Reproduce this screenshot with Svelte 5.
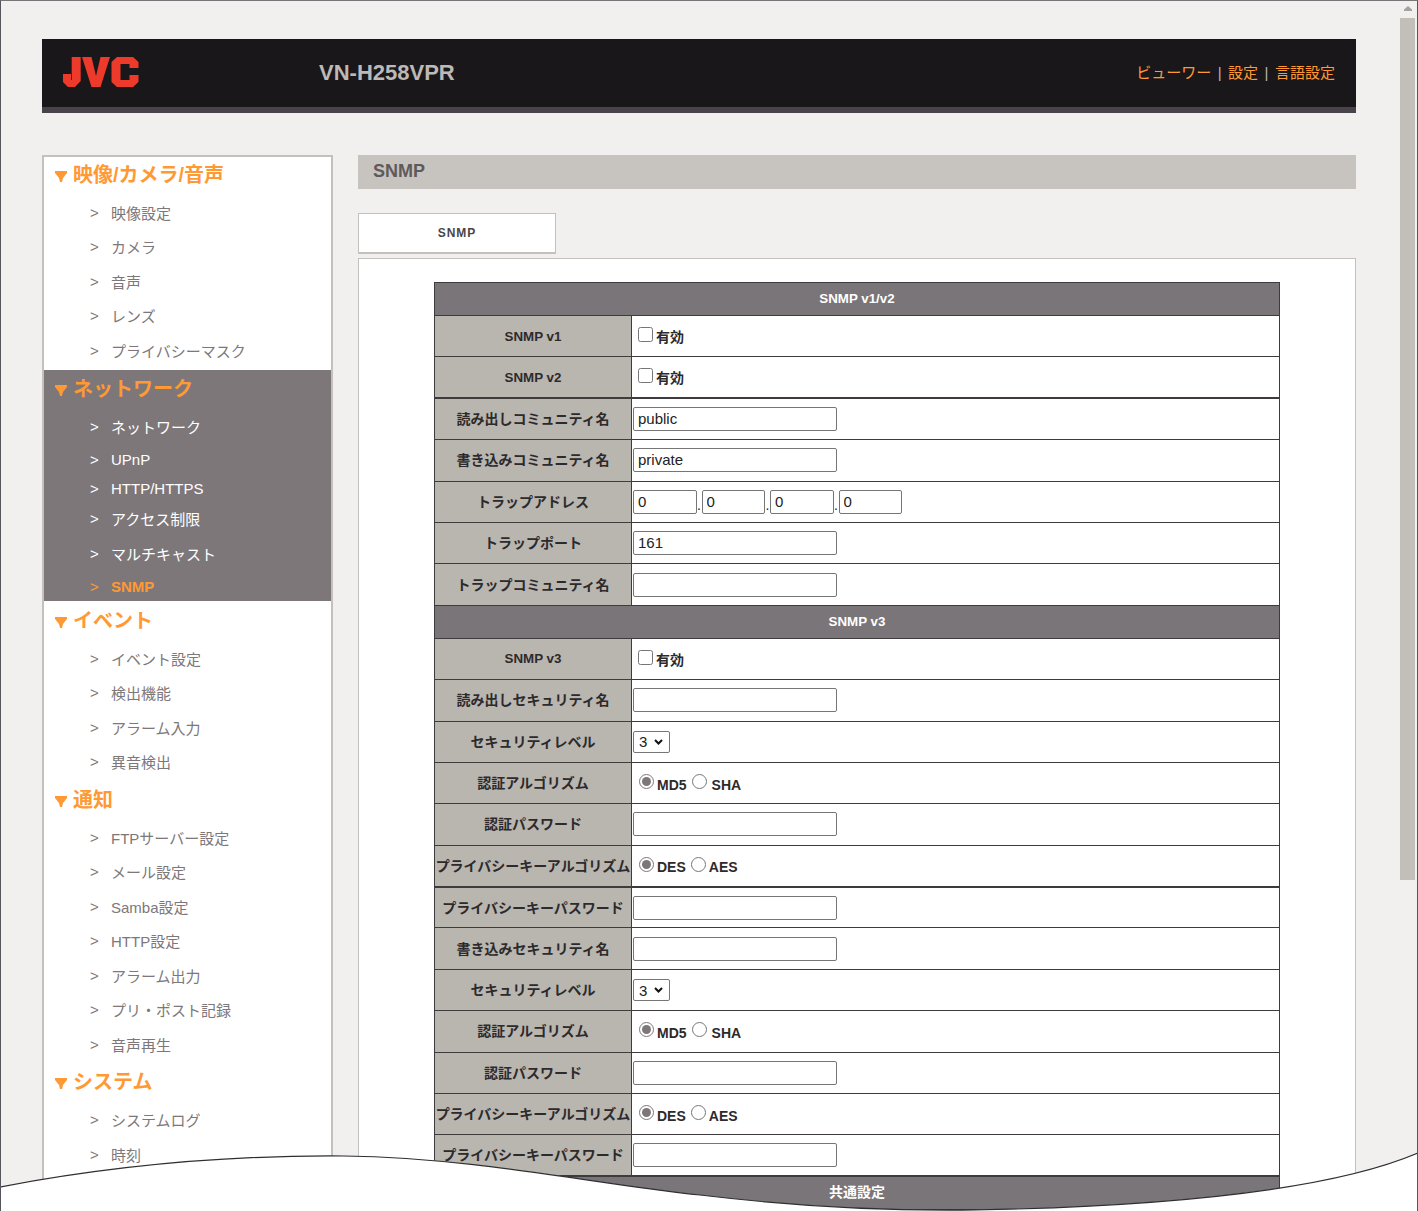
<script lang="ts">
  type Item = { label: string; short?: boolean; current?: boolean };
  type Group = { title: string; active?: boolean; items: Item[] };

  const groups: Group[] = [
    {
      title: '映像/カメラ/音声',
      items: [{ label: '映像設定' }, { label: 'カメラ' }, { label: '音声' }, { label: 'レンズ' }, { label: 'プライバシーマスク' }],
    },
    {
      title: 'ネットワーク',
      active: true,
      items: [
        { label: 'ネットワーク' },
        { label: 'UPnP', short: true },
        { label: 'HTTP/HTTPS', short: true },
        { label: 'アクセス制限' },
        { label: 'マルチキャスト' },
        { label: 'SNMP', short: true, current: true },
      ],
    },
    {
      title: 'イベント',
      items: [{ label: 'イベント設定' }, { label: '検出機能' }, { label: 'アラーム入力' }, { label: '異音検出' }],
    },
    {
      title: '通知',
      items: [
        { label: 'FTPサーバー設定' },
        { label: 'メール設定' },
        { label: 'Samba設定' },
        { label: 'HTTP設定' },
        { label: 'アラーム出力' },
        { label: 'プリ・ポスト記録' },
        { label: '音声再生' },
      ],
    },
    {
      title: 'システム',
      items: [{ label: 'システムログ' }, { label: '時刻' }],
    },
  ];

  type Row =
    | { kind: 'head'; label: string }
    | { kind: 'check' | 'text' | 'ip' | 'level'; label: string; value?: string; thick?: boolean }
    | { kind: 'radio'; label: string; options: string[]; thick?: boolean };

  const rows: Row[] = [
    { kind: 'head', label: 'SNMP v1/v2' },
    { kind: 'check', label: 'SNMP v1' },
    { kind: 'check', label: 'SNMP v2', thick: true },
    { kind: 'text', label: '読み出しコミュニティ名', value: 'public' },
    { kind: 'text', label: '書き込みコミュニティ名', value: 'private' },
    { kind: 'ip', label: 'トラップアドレス' },
    { kind: 'text', label: 'トラップポート', value: '161' },
    { kind: 'text', label: 'トラップコミュニティ名' },
    { kind: 'head', label: 'SNMP v3' },
    { kind: 'check', label: 'SNMP v3' },
    { kind: 'text', label: '読み出しセキュリティ名' },
    { kind: 'level', label: 'セキュリティレベル' },
    { kind: 'radio', label: '認証アルゴリズム', options: ['MD5', 'SHA'] },
    { kind: 'text', label: '認証パスワード' },
    { kind: 'radio', label: 'プライバシーキーアルゴリズム', options: ['DES', 'AES'], thick: true },
    { kind: 'text', label: 'プライバシーキーパスワード' },
    { kind: 'text', label: '書き込みセキュリティ名' },
    { kind: 'level', label: 'セキュリティレベル' },
    { kind: 'radio', label: '認証アルゴリズム', options: ['MD5', 'SHA'] },
    { kind: 'text', label: '認証パスワード' },
    { kind: 'radio', label: 'プライバシーキーアルゴリズム', options: ['DES', 'AES'] },
    { kind: 'text', label: 'プライバシーキーパスワード', thick: true },
    { kind: 'head', label: '共通設定' },
  ];

  const isLatin = (label: string) => label.startsWith('SNMP');
</script>

<div class="page">
  <header class="top">
    <div class="top-main">
      <svg class="logo" viewBox="0 0 77 30" width="77" height="30" aria-label="JVC">
        <path d="M8.7 0H17.7V24L12 30H5L0 25V17H8V23H8.7Z" />
        <path d="M19 0H28.5L33 19L37.5 0H47L37.5 30H28.5Z" />
        <path d="M54 0H70L75.5 5V11H66.5V7H57.5V23H66.5V18H75.5V25L70 30H54L48.5 25V5Z" />
      </svg>
      <div class="model">VN-H258VPR</div>
      <nav class="links">
        <a href="#viewer">ビューワー</a><span class="sep">|</span><a href="#settings">設定</a><span class="sep">|</span><a href="#lang">言語設定</a>
      </nav>
    </div>
  </header>

  <div class="body">
    <aside class="side">
      {#each groups as group}
        <section class="group" class:active={group.active}>
          <h3>
            <svg class="tri" viewBox="0 0 12 11" width="12" height="11"><path d="M0 0H12V2L8 7L7 11H5L4 7L0 2Z" /></svg>
            {group.title}
          </h3>
          <ul>
            {#each group.items as item}
              <li class:short={item.short} class:current={item.current}>
                <span class="arrow">&gt;</span>
                <span>{item.label}</span>
              </li>
            {/each}
          </ul>
        </section>
      {/each}
    </aside>

    <main class="main">
      <div class="title">SNMP</div>
      <div class="tab">SNMP</div>
      <div class="panel">
        <table>
          <colgroup>
            <col class="col-name" />
            <col />
          </colgroup>
          <tbody>
            {#each rows as row, r}
              {#if row.kind === 'head'}
                <tr class="head"><th colspan="2" class:latin={isLatin(row.label)}>{row.label}</th></tr>
              {:else}
                <tr class:thick={row.thick}>
                  <th class="name" class:latin={isLatin(row.label)}>{row.label}</th>
                  <td>
                    {#if row.kind === 'check'}
                      <label class="opt check"><input type="checkbox" /><span class="lbl">有効</span></label>
                    {:else if row.kind === 'text'}
                      <input class="field" type="text" value={row.value ?? ''} />
                    {:else if row.kind === 'ip'}
                      <div class="ip">
                        <input class="octet" type="text" value="0" /><span class="dot">.</span>
                        <input class="octet" type="text" value="0" /><span class="dot">.</span>
                        <input class="octet" type="text" value="0" /><span class="dot">.</span>
                        <input class="octet" type="text" value="0" />
                      </div>
                    {:else if row.kind === 'level'}
                      <div class="select-wrap">
                        <select class="level"><option>3</option></select>
                        <svg class="chev" viewBox="0 0 9 6" width="9" height="6"><path d="M1 1L4.5 4.5L8 1" /></svg>
                      </div>
                    {:else if row.kind === 'radio'}
                      <div class="radios">
                        {#each row.options as option, i}
                          <label class="opt"><input type="radio" name={'r' + r} checked={i === 0} /><span class="lbl" class:sha={option === 'SHA'}>{option}</span></label>
                        {/each}
                      </div>
                    {/if}
                  </td>
                </tr>
              {/if}
            {/each}
          </tbody>
        </table>
      </div>
    </main>
  </div>

  <!-- Page scrollbar -->
  <div class="scroll">
    <svg viewBox="0 0 8 5" width="8" height="5"><path d="M0 5V3.5L4 0L8 3.5V5Z" /></svg>
    <div class="thumb"></div>
  </div>

  <!-- Torn paper edge -->
  <svg class="tear" viewBox="0 0 1418 1211" width="1418" height="1211">
    <path class="fill" d="M0 1187C100 1168 220 1155 344 1156C480 1158 600 1185 700 1195C800 1207 900 1211 975 1210C1130 1207 1320 1195 1418 1153V1211H0Z" />
    <path class="edge" d="M0 1187C100 1168 220 1155 344 1156C480 1158 600 1185 700 1195C800 1207 900 1211 975 1210C1130 1207 1320 1195 1418 1153" />
  </svg>
</div>

<style>
  :global(body) {
    margin: 0;
    background: #fff;
  }

  .page {
    position: relative;
    box-sizing: border-box;
    width: 1418px;
    height: 1211px;
    overflow: hidden;
    background: #f1f0ee;
    border-top: 1px solid #77777a;
    border-left: 1px solid #55565c;
    border-right: 1px solid #55565c;
    padding: 38px 61px 0 41px;
    font-family: 'Liberation Sans', 'Noto Sans CJK JP', sans-serif;
  }

  .top {
    background: #4a424a;
    padding-bottom: 6px;
  }

  .top-main {
    display: flex;
    align-items: center;
    height: 68px;
    background: #1a171b;
    padding: 0 21px;
  }

  .logo {
    fill: #ee3a2a;
    flex: none;
    margin-top: -2px;
  }

  .model {
    margin-left: 179px;
    font-size: 22px;
    font-weight: bold;
    color: #bdb9b6;
  }

  .links {
    margin-left: auto;
    margin-top: -3px;
    font-size: 15px;
    color: #ff9933;
  }

  .links a {
    color: inherit;
    text-decoration: none;
  }

  .sep {
    margin: 0 6.5px;
    color: #b9b5af;
  }

  .body {
    display: flex;
    align-items: flex-start;
    margin-top: 42px;
  }

  .side {
    flex: none;
    box-sizing: border-box;
    width: 291px;
    height: 1200px;
    background: #fff;
    border: 2px solid #c4c1bc;
    border-bottom: 0;
  }

  .group:first-child {
    padding-bottom: 1.5px;
  }

  .group.active {
    background: #7d777a;
    padding-bottom: 0.5px;
  }

  h3 {
    display: flex;
    align-items: center;
    gap: 6px;
    box-sizing: border-box;
    height: 41px;
    margin: 0;
    padding: 0 0 2px 11px;
    font-size: 20px;
    font-weight: bold;
    line-height: 34px;
    color: #ff9933;
  }

  .group:first-child h3 {
    height: 39px;
    padding-bottom: 4px;
  }

  .group.active h3 {
    height: 40px;
    padding-bottom: 2px;
  }

  .tri {
    fill: #ff9933;
    flex: none;
    margin-top: 3px;
  }

  ul {
    margin: 0;
    padding: 0;
    list-style: none;
  }

  li {
    display: flex;
    align-items: center;
    box-sizing: border-box;
    height: 34.5px;
    padding: 0 0 2px 46px;
    font-size: 15px;
    color: #7d777a;
  }

  li.short {
    height: 29px;
    padding-bottom: 0;
  }

  .active li {
    color: #fff;
  }

  .active li.current {
    color: #ff9933;
    font-weight: bold;
  }

  .arrow {
    width: 21px;
    flex: none;
    font-size: 15px;
    font-weight: normal;
  }

  .main {
    flex: none;
    width: 998px;
    margin-left: 25px;
  }

  .title {
    height: 34px;
    padding-left: 15px;
    background: #c7c3bf;
    font-size: 18px;
    font-weight: bold;
    line-height: 33px;
    color: #5f5a5c;
  }

  .tab {
    box-sizing: border-box;
    width: 198px;
    height: 41px;
    margin-top: 24px;
    background: #fff;
    border: 1px solid #c4c1bc;
    border-bottom-width: 2px;
    font-size: 12px;
    font-weight: bold;
    letter-spacing: 1px;
    line-height: 38px;
    text-align: center;
    color: #4a4648;
  }

  .panel {
    box-sizing: border-box;
    height: 1000px;
    margin-top: 4px;
    padding: 23px 75px 0;
    background: #fff;
    border: 1px solid #c4c1bc;
  }

  table {
    width: 846px;
    border-collapse: collapse;
    table-layout: fixed;
    border: 1px solid #3f3b3d;
  }

  .col-name {
    width: 197px;
  }

  tr {
    height: 41.4px;
  }

  tr.head {
    height: 33px;
  }

  tr.head th {
    background: #7a7578;
    color: #fff;
    font-size: 14px;
    font-weight: bold;
    padding: 0 0 4px;
  }

  tr.head th.latin {
    font-size: 13.33px;
    padding-bottom: 1px;
  }

  tr > * {
    border: 1px solid #3f3b3d;
  }

  tr.thick > * {
    border-bottom-width: 2px;
  }

  th.name {
    padding: 0 0 2px;
    background: #b9b5af;
    color: #2c2a2c;
    font-size: 14px;
    font-weight: bold;
    text-align: center;
    white-space: nowrap;
  }

  th.name.latin {
    padding: 0;
    font-size: 13.33px;
  }

  td {
    padding: 0 0 0 1px;
    background: #fff;
  }

  input[type='text'] {
    display: block;
    box-sizing: border-box;
    height: 24px;
    padding: 0 4px 1px;
    border: 1px solid #767676;
    border-radius: 2px;
    font-family: inherit;
    font-size: 15px;
    color: #222;
    outline: none;
  }

  .field {
    width: 204px;
  }

  .ip {
    display: flex;
    align-items: center;
  }

  .octet {
    width: 63.5px;
  }

  .dot {
    width: 5px;
    font-size: 14px;
    text-align: center;
    margin-top: 6px;
    color: #222;
  }

  .select-wrap {
    position: relative;
    width: 37px;
  }

  .level {
    display: block;
    box-sizing: border-box;
    width: 37px;
    height: 22px;
    padding: 0 0 0 5px;
    font-family: inherit;
    font-size: 15px;
    appearance: none;
    border-radius: 2px;
    border: 1px solid #767676;
    background: #fff;
    color: #222;
  }

  /* Select arrow lies over the native control */
  .chev {
    position: absolute;
    top: 8px;
    right: 7px;
    fill: none;
    stroke: #111;
    stroke-width: 2;
    pointer-events: none;
  }

  .radios {
    display: flex;
    gap: 5px;
  }

  .opt {
    display: inline-flex;
    align-items: center;
    padding-left: 5px;
  }

  .radios .opt:first-child {
    padding-left: 6px;
  }

  .radios .opt + .opt {
    padding-left: 0;
  }

  .opt input {
    flex: none;
    width: 15px;
    height: 15px;
    margin: -3px 3px 0 0;
    accent-color: #7d777a;
  }

  .lbl {
    font-size: 14px;
    font-weight: bold;
    color: #2c2a2c;
    margin-top: 3px;
  }

  .lbl.sha {
    margin-left: 2px;
  }

  .check .lbl {
    margin-top: 0;
  }

  .scroll {
    position: absolute;
    top: 5px;
    right: 2px;
    width: 15px;
    display: flex;
    flex-direction: column;
    align-items: center;
    gap: 7px;
    fill: #a5a29e;
  }

  .thumb {
    width: 15px;
    height: 862px;
    background: #c2bfb9;
  }

  .tear {
    position: absolute;
    top: -1px;
    left: -1px;
    pointer-events: none;
  }

  .fill {
    fill: #fff;
  }

  .edge {
    fill: none;
    stroke: #2f2f33;
    stroke-width: 1.2;
  }
</style>
